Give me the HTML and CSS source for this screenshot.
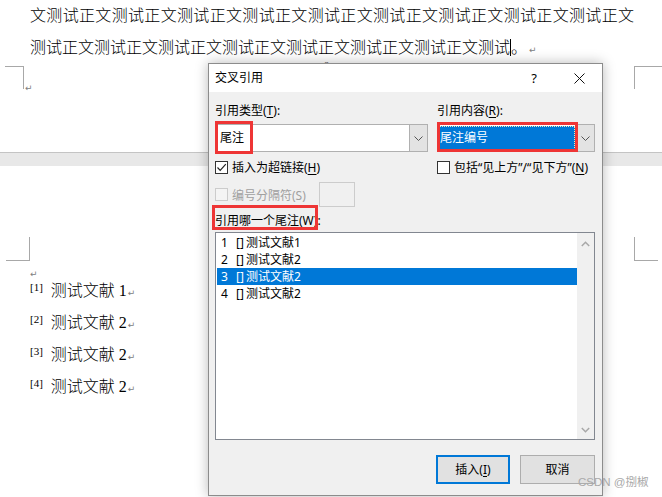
FILE: index.html
```html
<!DOCTYPE html>
<html lang="zh-CN">
<head>
<meta charset="utf-8">
<title>交叉引用</title>
<link rel="stylesheet" href="styles.css">
</head>
<body>
<div class="doc">
  <section class="page-top">
    <p class="body-text"><span class="line line-full">文测试正文测试正文测试正文测试正文测试正文测试正文测试正文测试正文测试正文</span><span class="line">测试正文测试正文测试正文测试正文测试正文测试正文测试正文测试<span class="caret"></span>。<span class="pm pm-para">↵</span></span></p>
    <div class="page-end">
      <div class="corner corner-tl"></div>
      <span class="pm pm-end">↵</span>
      <span class="pageno">2<span class="pm">↵</span></span>
      <div class="corner corner-tr"></div>
    </div>
  </section>
  <div class="page-gap"></div>
  <section class="page-bottom">
    <div class="page-start">
      <div class="corner corner-bl"></div>
      <div class="corner corner-br"></div>
    </div>
    <div class="pm-line"><span class="pm">↵</span></div>
    <ol class="refs">
      <li><span class="ref-no">[1]</span>测试文献 1<span class="pm">↵</span></li>
      <li><span class="ref-no">[2]</span>测试文献 2<span class="pm">↵</span></li>
      <li><span class="ref-no">[3]</span>测试文献 2<span class="pm">↵</span></li>
      <li><span class="ref-no">[4]</span>测试文献 2<span class="pm">↵</span></li>
    </ol>
  </section>
</div>

<div class="dialog">
  <div class="titlebar">
    <span class="title">交叉引用</span>
    <span class="help">?</span>
    <span class="close">
      <svg width="11" height="11" viewBox="0 0 11 11"><path d="M0.5 0.5 L10.5 10.5 M10.5 0.5 L0.5 10.5" stroke="#111" stroke-width="1" fill="none"/></svg>
    </span>
  </div>
  <div class="dbody">
    <div class="top-grid">
      <div class="lbl">引用类型(<u>T</u>):</div>
      <div class="lbl">引用内容(<u>R</u>):</div>
      <div class="combo">
        <div class="field"><span class="val">尾注</span></div>
        <div class="drop"><svg width="9" height="5" viewBox="0 0 9 5"><polyline points="0.5,0.5 4.5,4.5 8.5,0.5" fill="none" stroke="#555" stroke-width="1"/></svg></div>
        <div class="redbox rb-type"></div>
      </div>
      <div class="combo">
        <div class="field"><span class="sel-val">尾注编号</span></div>
        <div class="drop"><svg width="9" height="5" viewBox="0 0 9 5"><polyline points="0.5,0.5 4.5,4.5 8.5,0.5" fill="none" stroke="#555" stroke-width="1"/></svg></div>
        <div class="redbox rb-content"></div>
      </div>
      <label class="chk">
        <span class="box"><svg width="11" height="11" viewBox="0 0 11 11"><polyline points="1.5,5.5 4.2,8.3 9.8,2.2" fill="none" stroke="#222" stroke-width="1.2"/></svg></span>
        <span>插入为超链接(<u>H</u>)</span>
      </label>
      <label class="chk">
        <span class="box"></span>
        <span>包括“见上方”/“见下方”(<u>N</u>)</span>
      </label>
    </div>
    <div class="sep-row">
      <label class="chk disabled">
        <span class="box"></span>
        <span>编号分隔符(S)</span>
      </label>
      <span class="sep-input"></span>
    </div>
    <div class="lbl lbl-which"><span class="lbl-text">引用哪一个尾注(<u>W</u>):<span class="redbox rb-which"></span></span></div>
    <div class="list">
      <div class="rows">
        <div class="row"><span class="num">1</span><span class="brk">[]</span><span>测试文献1</span></div>
        <div class="row"><span class="num">2</span><span class="brk">[]</span><span>测试文献2</span></div>
        <div class="row selected"><span class="num">3</span><span class="brk">[]</span><span>测试文献2</span></div>
        <div class="row"><span class="num">4</span><span class="brk">[]</span><span>测试文献2</span></div>
      </div>
      <div class="scroll">
        <svg width="9" height="6" viewBox="0 0 9 6"><polyline points="0.8,5 4.5,1.3 8.2,5" fill="none" stroke="#a8a8a8" stroke-width="1.5"/></svg>
        <svg width="9" height="6" viewBox="0 0 9 6"><polyline points="0.8,1 4.5,4.7 8.2,1" fill="none" stroke="#a8a8a8" stroke-width="1.5"/></svg>
      </div>
    </div>
    <div class="btns">
      <span class="btn default">插入(<u>I</u>)</span>
      <span class="btn cancel">取消</span>
    </div>
  </div>
</div>

<div class="wm">CSDN @捌椒</div>
</body>
</html>
```

FILE: styles.css
```css
* { box-sizing: border-box; }
html, body { margin: 0; padding: 0; }
body {
  width: 662px;
  height: 497px;
  overflow: hidden;
  position: relative;
  background: #fff;
  color: #000;
  font-family: "Liberation Serif", "Noto Sans CJK SC", serif;
}

/* ---------- document ---------- */
.page-top { height: 154px; }
.body-text {
  margin: -2px 0 0 30px;
  width: 604px;
  font-family: "Noto Sans CJK SC", sans-serif;
  font-weight: 300;
  font-size: 16px;
  line-height: 32px;
}
.line { display: block; white-space: nowrap; }
.line-full {
  text-align: justify;
  text-align-last: justify;
}
.caret {
  display: inline-block;
  width: 1px;
  height: 17px;
  background: #000;
  vertical-align: -3px;
}
.pm {
  font-family: "DejaVu Sans", sans-serif;
  font-weight: 400;
  font-size: 9px;
  color: #808080;
  margin-left: 3px;
}
.pm-para { margin-left: 2px; }
.page-end {
  display: flex;
  align-items: flex-start;
  height: 27px;
}
.corner { flex: none; }
.corner-tl {
  margin-left: 5px;
  width: 19px;
  height: 23px;
  border-top: 1px solid #a8a8a8;
  border-right: 1px solid #a8a8a8;
}
.pm-end {
  align-self: flex-end;
  line-height: 10px;
  margin-left: 1px;
}
.pageno {
  margin-left: 292px;
  margin-top: -5px;
  font-size: 9px;
  line-height: 9px;
}
.pageno .pm { margin-left: 0; font-size: 7px; }
.corner-tr {
  margin-left: auto;
  width: 28px;
  height: 23px;
  border-top: 1px solid #a8a8a8;
  border-left: 1px solid #a8a8a8;
}
.page-gap {
  height: 14px;
  background: #e8e8e8;
  border-top: 1px solid #c4c4c4;
}
.page-start {
  display: flex;
  margin-top: 71px;
}
.corner-bl {
  margin-left: 6px;
  width: 24px;
  height: 24px;
  border-right: 1px solid #a8a8a8;
  border-bottom: 1px solid #a8a8a8;
}
.corner-br {
  margin-left: auto;
  margin-right: 4px;
  width: 24px;
  height: 24px;
  border-left: 1px solid #a8a8a8;
  border-bottom: 1px solid #a8a8a8;
}
.pm-line {
  height: 15px;
  padding-left: 27px;
  line-height: 22px;
}
.refs {
  list-style: none;
  margin: 0;
  padding: 0 0 0 30px;
  font-size: 16px;
  font-weight: 300;
  line-height: 30px;
}
.refs li { white-space: nowrap; }
.ref-no {
  font-size: 11px;
  font-weight: 400;
  vertical-align: 5px;
  line-height: 0;
  margin-right: 8px;
}
.refs .pm { margin-left: 1px; }

/* ---------- dialog ---------- */
.dialog {
  position: absolute;
  left: 208px;
  top: 63px;
  width: 395px;
  height: 433px;
  border: 1px solid #8c8c8c;
  background: #f0f0f0;
  box-shadow: 0 0 12px rgba(0, 0, 0, 0.28);
  font-family: "Noto Sans", "Noto Sans CJK SC", sans-serif;
  font-size: 12px;
  color: #000;
  display: flex;
  flex-direction: column;
}
.titlebar {
  height: 28px;
  flex: none;
  background: #fff;
  display: flex;
  align-items: center;
  padding-left: 6px;
}
.title { line-height: 16px; }
.help {
  margin-left: auto;
  width: 30px;
  text-align: center;
  font-size: 13px;
  line-height: 16px;
}
.close {
  width: 46px;
  height: 28px;
  margin-left: 7px;
  display: flex;
  align-items: center;
  justify-content: center;
}
.dbody { padding: 10px 7px 0 6px; }
.lbl {
  height: 17px;
  line-height: 17px;
  white-space: nowrap;
}
u { text-underline-offset: 2px; }
.top-grid {
  display: grid;
  grid-template-columns: 213px 158px;
  column-gap: 9px;
}
.combo {
  position: relative;
  margin-top: 5px;
  height: 28px;
  border: 1px solid #b0b0b0;
  background: #fff;
  display: flex;
}
.field {
  flex: 1;
  padding: 1px;
  display: flex;
}
.val {
  padding-left: 3px;
  line-height: 24px;
}
.sel-val {
  flex: 1;
  background: #0078d7;
  color: #fff;
  line-height: 22px;
  border: 1px dotted #f3e9b8;
  padding-left: 0;
}
.drop {
  width: 18px;
  flex: none;
  background: #e3e3e3;
  border-left: 1px solid #b0b0b0;
  display: flex;
  align-items: center;
  justify-content: center;
}
.redbox {
  position: absolute;
  border: 3px solid #ee3535;
  pointer-events: none;
}
.rb-type { left: -1px; top: -4px; width: 38px; height: 33px; }
.rb-content { left: -1px; top: -3px; width: 141px; height: 30px; }
.chk {
  display: flex;
  align-items: center;
  height: 14px;
  margin-top: 8px;
  white-space: nowrap;
}
.box {
  flex: none;
  width: 13px;
  height: 13px;
  border: 1px solid #333;
  background: #fff;
  margin-right: 4px;
  display: flex;
  align-items: center;
  justify-content: center;
}
.chk.disabled { color: #a0a0a0; }
.chk.disabled .box { border-color: #cccccc; background: #f4f4f4; }
.sep-row {
  display: flex;
  align-items: center;
  height: 25px;
  margin-top: 8px;
}
.sep-row .chk { margin-top: 0; width: 104px; }
.sep-input {
  width: 36px;
  height: 25px;
  border: 1px solid #cccccc;
  background: #f0f0f0;
}
.lbl-which { margin-top: 5px; }
.lbl-text {
  position: relative;
  display: inline-block;
}
.rb-which { left: -3px; top: -7px; width: 106px; height: 25px; }
.list {
  margin-top: 3px;
  height: 208px;
  border: 1px solid #828790;
  background: #fff;
  display: flex;
}
.rows {
  flex: 1;
  padding: 1px 0 0 1px;
}
.row {
  height: 17px;
  line-height: 17px;
  display: flex;
  padding-left: 4px;
  white-space: nowrap;
}
.row.selected { background: #0078d7; color: #fff; }
.num { width: 15px; }
.brk { width: 10px; }
.scroll {
  width: 17px;
  flex: none;
  background: #f0f0f0;
  display: flex;
  flex-direction: column;
  justify-content: space-between;
  align-items: center;
  padding: 8px 0 6px;
}
.btns {
  display: flex;
  justify-content: flex-end;
  gap: 10px;
  margin-top: 15px;
}
.btn {
  height: 29px;
  width: 74px;
  background: #e1e1e1;
  border: 1px solid #adadad;
  display: flex;
  align-items: center;
  justify-content: center;
  line-height: 16px;
}
.btn.default { border: 2px solid #0078d7; }
.btn.cancel { width: 75px; }

/* ---------- watermark ---------- */
.wm {
  position: absolute;
  left: 578px;
  top: 474px;
  font-family: "Liberation Sans", "Noto Sans CJK SC", sans-serif;
  font-size: 11.5px;
  line-height: 16px;
  color: #a9a9a9;
  white-space: nowrap;
}
```
